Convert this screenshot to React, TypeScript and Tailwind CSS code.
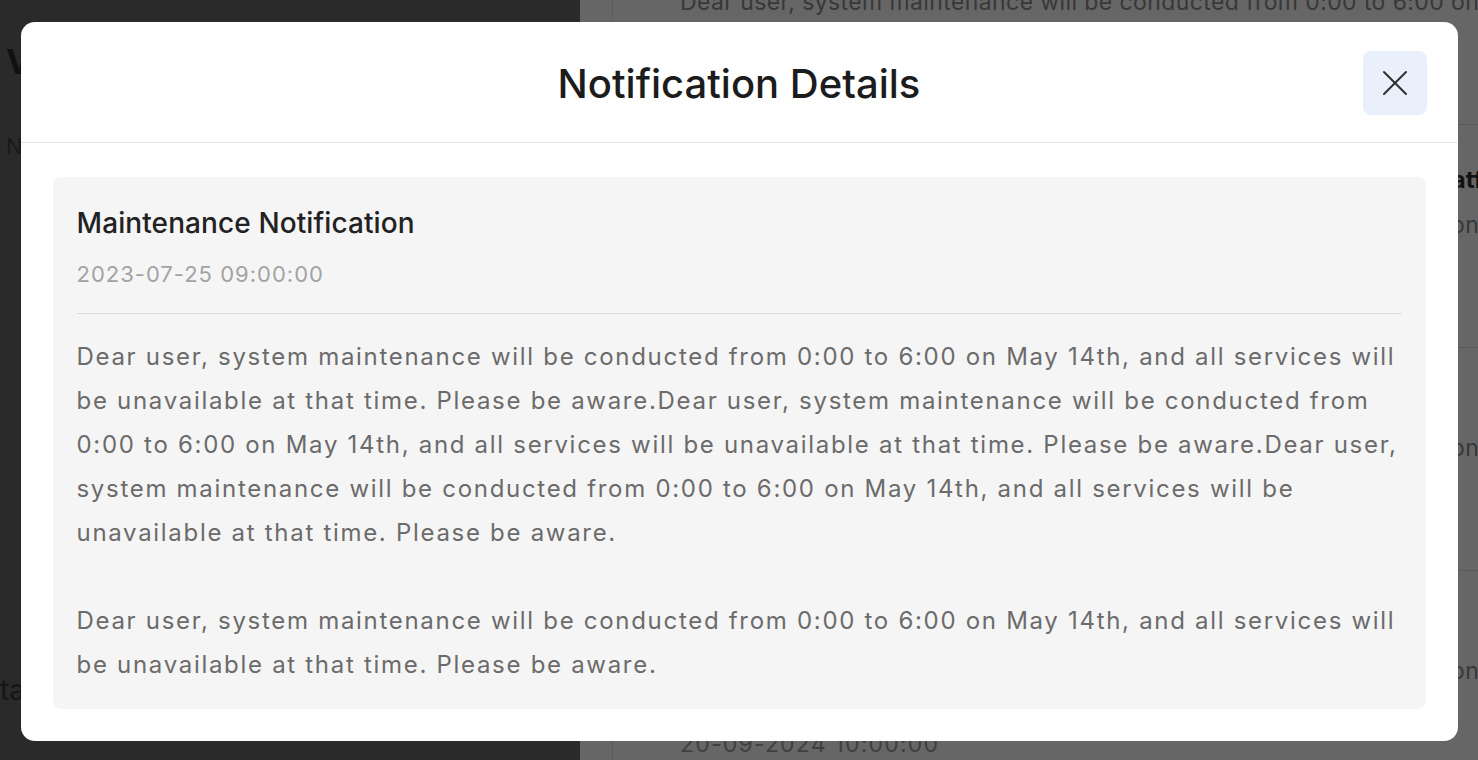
import React from "react";

const BODY =
  "Dear user, system maintenance will be conducted from 0:00 to 6:00 on May 14th, and all services will be unavailable at that time. Please be aware.";

const BG_ROWS = [
  { title: "Maintenance Notification", date: "25-07-2023 09:00:00" },
  { title: "Scheduled Service Interruption Notice for the Regular Quarterly Platform Upgrade and Calendar", date: "12-08-2023 14:30:00" },
  { title: "System Update", date: "03-01-2024 08:00:00" },
  { title: "Maintenance Notification", date: "20-09-2024 10:00:00" },
];

function CloseIcon() {
  return (
    <svg width="26" height="26" viewBox="0 0 26 26" fill="none" stroke="currentColor" strokeWidth="2" strokeLinecap="round">
      <path d="M2 2L24 24" />
      <path d="M24 2L2 24" />
    </svg>
  );
}

export default function App() {
  return (
    <div className="relative h-[760px] w-[1478px] overflow-hidden font-['Inter','Liberation_Sans',sans-serif]">
      {/* page behind the dialog, already dimmed */}
      <div className="flex h-full">
        <aside className="flex w-[580px] flex-none flex-col bg-[#2a2a2a] text-[#111]">
          <h1 className="mt-[42px] pl-[6px] text-[34px] font-bold leading-[40px]">Vehicle overview</h1>
          <p className="mt-[49px] pl-[6px] text-[22px] leading-[30px] text-[#1a1a1a]">Notification center</p>
          <p className="mt-auto mb-[52px] text-[28px] leading-[36px] text-[#151515]">tasks overview</p>
        </aside>
        <main className="flex flex-1 bg-[#666] pl-[32px]">
          <div className="flex flex-1 flex-col overflow-hidden border-l border-[#5c5c5c] pl-[67px] -mt-[98px]">
            {BG_ROWS.map((row, i) => (
              <div key={i} className="h-[223px] flex-none border-b border-[#5a5a5a] pt-[39px] whitespace-nowrap">
                <p className="text-[24px] font-bold leading-[32px] text-[#121212]">{row.title}</p>
                <p className="mt-[7px] text-[23px] leading-[44px] tracking-[0.4px] text-[#383838]">
                  Dear user, system maintenance will be conducted from 0:00 to 6:00 on May 14th
                </p>
                <p className="mt-[36px] text-[23px] leading-[30px] tracking-[1.2px] text-[#404040]">{row.date}</p>
              </div>
            ))}
          </div>
        </main>
      </div>

      {/* dialog */}
      <div className="absolute inset-0 flex items-center justify-center pt-[2px]">
        <div className="w-[1437px] overflow-hidden rounded-[14px] bg-white">
          <header className="relative flex h-[121px] items-center justify-center border-b border-[#e7e7e7] pt-[4px]">
            <h2 className="text-[40px] font-medium leading-[48px] text-[#1c1c1c]">Notification Details</h2>
            <button className="absolute right-[31px] top-[29px] flex h-[64px] w-[64px] items-center justify-center rounded-[8px] bg-[#e9f0fb] text-[#2e2e2e]">
              <CloseIcon />
            </button>
          </header>

          <div className="px-[32px] pt-[34px] pb-[32px]">
            <div className="rounded-[8px] bg-[#f5f5f5] px-[24px] pt-[28px] pb-[22px]">
              <h3 className="text-[28px] font-medium leading-[36px] tracking-[0.1px] text-[#222]">Maintenance Notification</h3>
              <p className="mt-[18px] text-[22px] leading-[30px] tracking-[1px] text-[#a3a3a3]">2023-07-25 09:00:00</p>
              <div className="mt-[24px] border-t border-[#dcdcdc]" />
              <div className="mt-[21px] text-[24px] leading-[44px] tracking-[1.7px] text-[#6b6b6b]">
                <p>
                  {BODY}
                  {BODY}
                  {BODY}
                </p>
                <p className="mt-[44px]">{BODY}</p>
              </div>
            </div>
          </div>
        </div>
      </div>
    </div>
  );
}
